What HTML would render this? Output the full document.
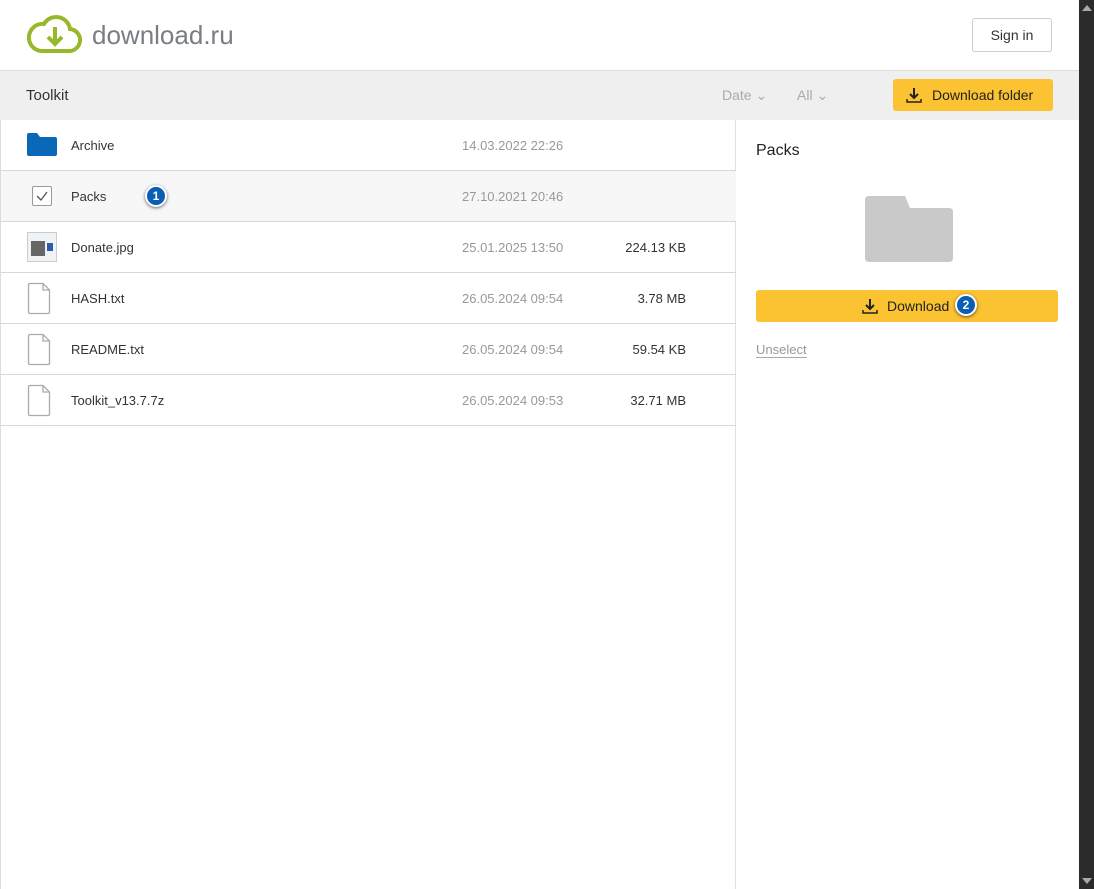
<!DOCTYPE html>
<html><head><meta charset="utf-8"><style>
*{margin:0;padding:0;box-sizing:border-box}
body{width:1094px;height:889px;overflow:hidden;background:#fff;font-family:"Liberation Sans",sans-serif;color:#333;position:relative}
.sb{position:absolute;left:1079px;top:0;width:15px;height:889px;background:#2b2b2b}
.hdr{position:absolute;left:0;top:0;width:1079px;height:71px;border-bottom:1px solid #dcdcdc}
.logo{position:absolute;left:92px;top:20px;font-size:26px;color:#7a7d86}
.signin{position:absolute;left:972px;top:18px;width:80px;height:34px;border:1px solid #ccc;border-radius:3px;font-size:14px;text-align:center;line-height:32px;color:#333}
.tb{position:absolute;left:0;top:71px;width:1079px;height:49px;background:#efefef}
.tb .t{position:absolute;left:26px;top:16px;font-size:15px;color:#333}
.flt{position:absolute;top:16px;font-size:14px;color:#aaa}
.dlf{position:absolute;left:893px;top:8px;width:160px;height:32px;background:#fbc232;border-radius:3px;font-size:14px;line-height:32px;color:#222;padding-left:39px}
.left{position:absolute;left:0;top:120px;width:736px;height:769px;border-right:1px solid #e0e0e0;border-left:1px solid #ddd}
.row{position:absolute;left:0;width:735px;height:51px;border-bottom:1px solid #d8d8d8;font-size:13px}
.row .n{position:absolute;left:70px;top:18px;color:#333}
.row .d{position:absolute;left:461px;top:18px;color:#999}
.row .s{position:absolute;right:50px;top:18px;color:#333}
.ic{position:absolute;left:26px}
.badge{position:absolute;width:22px;height:22px;border-radius:50%;background:#0a5fb4;border:2px solid #fff;box-shadow:0 1px 3px rgba(0,0,0,.6);color:#fff;font-size:12px;font-weight:bold;text-align:center;line-height:18px}
.rp .title{position:absolute;left:756px;top:142px;font-size:16px;color:#222}
.dl{position:absolute;left:756px;top:290px;width:302px;height:32px;background:#fbc232;border-radius:3px;font-size:14px;line-height:32px;color:#222}
.uns{position:absolute;left:756px;top:343px;font-size:13px;color:#999;border-bottom:1px solid #aaa;line-height:14px}
</style></head><body>
<div class="hdr">
<svg style="position:absolute;left:27px;top:14px" width="55" height="40" viewBox="0 0 55 40"><path d="M14 37 H41 A11 11 0 0 0 43 15 A14 14 0 0 0 17 10 A13 13 0 0 0 14 37 Z" fill="none" stroke="#98b82b" stroke-width="4"/><path d="M28 13 V29 M21 23 L28 30 L35 23" fill="none" stroke="#98b82b" stroke-width="4"/></svg>
<div class="logo">download.ru</div>
<div class="signin">Sign in</div>
</div>
<div class="tb"><div class="t">Toolkit</div>
<div class="flt" style="left:722px">Date ⌄</div><div class="flt" style="left:797px">All ⌄</div>
<div class="dlf"><svg style="position:absolute;left:13px;top:8px" width="16" height="16" viewBox="0 0 16 16"><path d="M8 1V11M4 7L8 11L12 7" stroke="#222" stroke-width="2" fill="none"/><path d="M1 12V15H15V12" stroke="#222" stroke-width="1.5" fill="none"/></svg>Download folder</div>
</div>
<div class="left">
<div class="row" style="top:0"><svg class="ic" style="top:13px" width="30" height="23"><path d="M0 2Q0 0 2 0H10L13 4H28Q30 4 30 6V21Q30 23 28 23H2Q0 23 0 21Z" fill="#0a68b8"/></svg><div class="n">Archive</div><div class="d">14.03.2022 22:26</div></div>
<div class="row" style="top:51px;background:#f7f7f7"><div class="ic" style="left:31px;top:15px;width:20px;height:20px;border:1px solid #999;border-radius:2px;background:#fff"><svg width="18" height="18"><path d="M4 9L8 13L14 5" stroke="#555" stroke-width="1.3" fill="none"/></svg></div><div class="n">Packs</div><div class="d">27.10.2021 20:46</div><div class="badge" style="left:144px;top:14px">1</div></div>
<div class="row" style="top:102px"><div class="ic" style="top:10px;width:30px;height:30px;border:1px solid #ccc;background:#f0f3f6"><div style="position:absolute;left:3px;top:8px;width:14px;height:15px;background:#666"></div><div style="position:absolute;left:19px;top:10px;width:6px;height:8px;background:#2a5ca8"></div></div><div class="n">Donate.jpg</div><div class="d">25.01.2025 13:50</div><div class="s">224.13 KB</div></div>
<div class="row" style="top:153px"><svg class="ic" style="top:9px" width="24" height="33"><path d="M1.5 3Q1.5 1.5 3 1.5H16L22.5 8V30Q22.5 31.5 21 31.5H3Q1.5 31.5 1.5 30Z" fill="#fff" stroke="#aaa" stroke-width="1.3"/><path d="M16 1.5V8H22.5" fill="none" stroke="#aaa" stroke-width="1.3"/></svg><div class="n">HASH.txt</div><div class="d">26.05.2024 09:54</div><div class="s">3.78 MB</div></div>
<div class="row" style="top:204px"><svg class="ic" style="top:9px" width="24" height="33"><path d="M1.5 3Q1.5 1.5 3 1.5H16L22.5 8V30Q22.5 31.5 21 31.5H3Q1.5 31.5 1.5 30Z" fill="#fff" stroke="#aaa" stroke-width="1.3"/><path d="M16 1.5V8H22.5" fill="none" stroke="#aaa" stroke-width="1.3"/></svg><div class="n">README.txt</div><div class="d">26.05.2024 09:54</div><div class="s">59.54 KB</div></div>
<div class="row" style="top:255px"><svg class="ic" style="top:9px" width="24" height="33"><path d="M1.5 3Q1.5 1.5 3 1.5H16L22.5 8V30Q22.5 31.5 21 31.5H3Q1.5 31.5 1.5 30Z" fill="#fff" stroke="#aaa" stroke-width="1.3"/><path d="M16 1.5V8H22.5" fill="none" stroke="#aaa" stroke-width="1.3"/></svg><div class="n">Toolkit_v13.7.7z</div><div class="d">26.05.2024 09:53</div><div class="s">32.71 MB</div></div>
</div>
<div class="rp">
<div class="title">Packs</div>
<svg style="position:absolute;left:865px;top:196px" width="88" height="66"><path d="M0 4Q0 0 4 0H40L45 12H84Q88 12 88 16V62Q88 66 84 66H4Q0 66 0 62Z" fill="#c9c9c9"/></svg>
<div class="dl"><svg style="position:absolute;left:106px;top:8px" width="16" height="16" viewBox="0 0 16 16"><path d="M8 1V11M4 7L8 11L12 7" stroke="#222" stroke-width="2" fill="none"/><path d="M1 12V15H15V12" stroke="#222" stroke-width="1.5" fill="none"/></svg><span style="position:absolute;left:131px">Download</span></div>
<div class="badge" style="left:955px;top:294px">2</div>
<div class="uns">Unselect</div>
</div>
<div class="sb"><div style="position:absolute;left:3px;top:5px;border:5px solid transparent;border-bottom:6px solid #aaa;border-top:0"></div><div style="position:absolute;left:3px;top:878px;border:5px solid transparent;border-top:6px solid #aaa;border-bottom:0"></div></div>
</body></html>
